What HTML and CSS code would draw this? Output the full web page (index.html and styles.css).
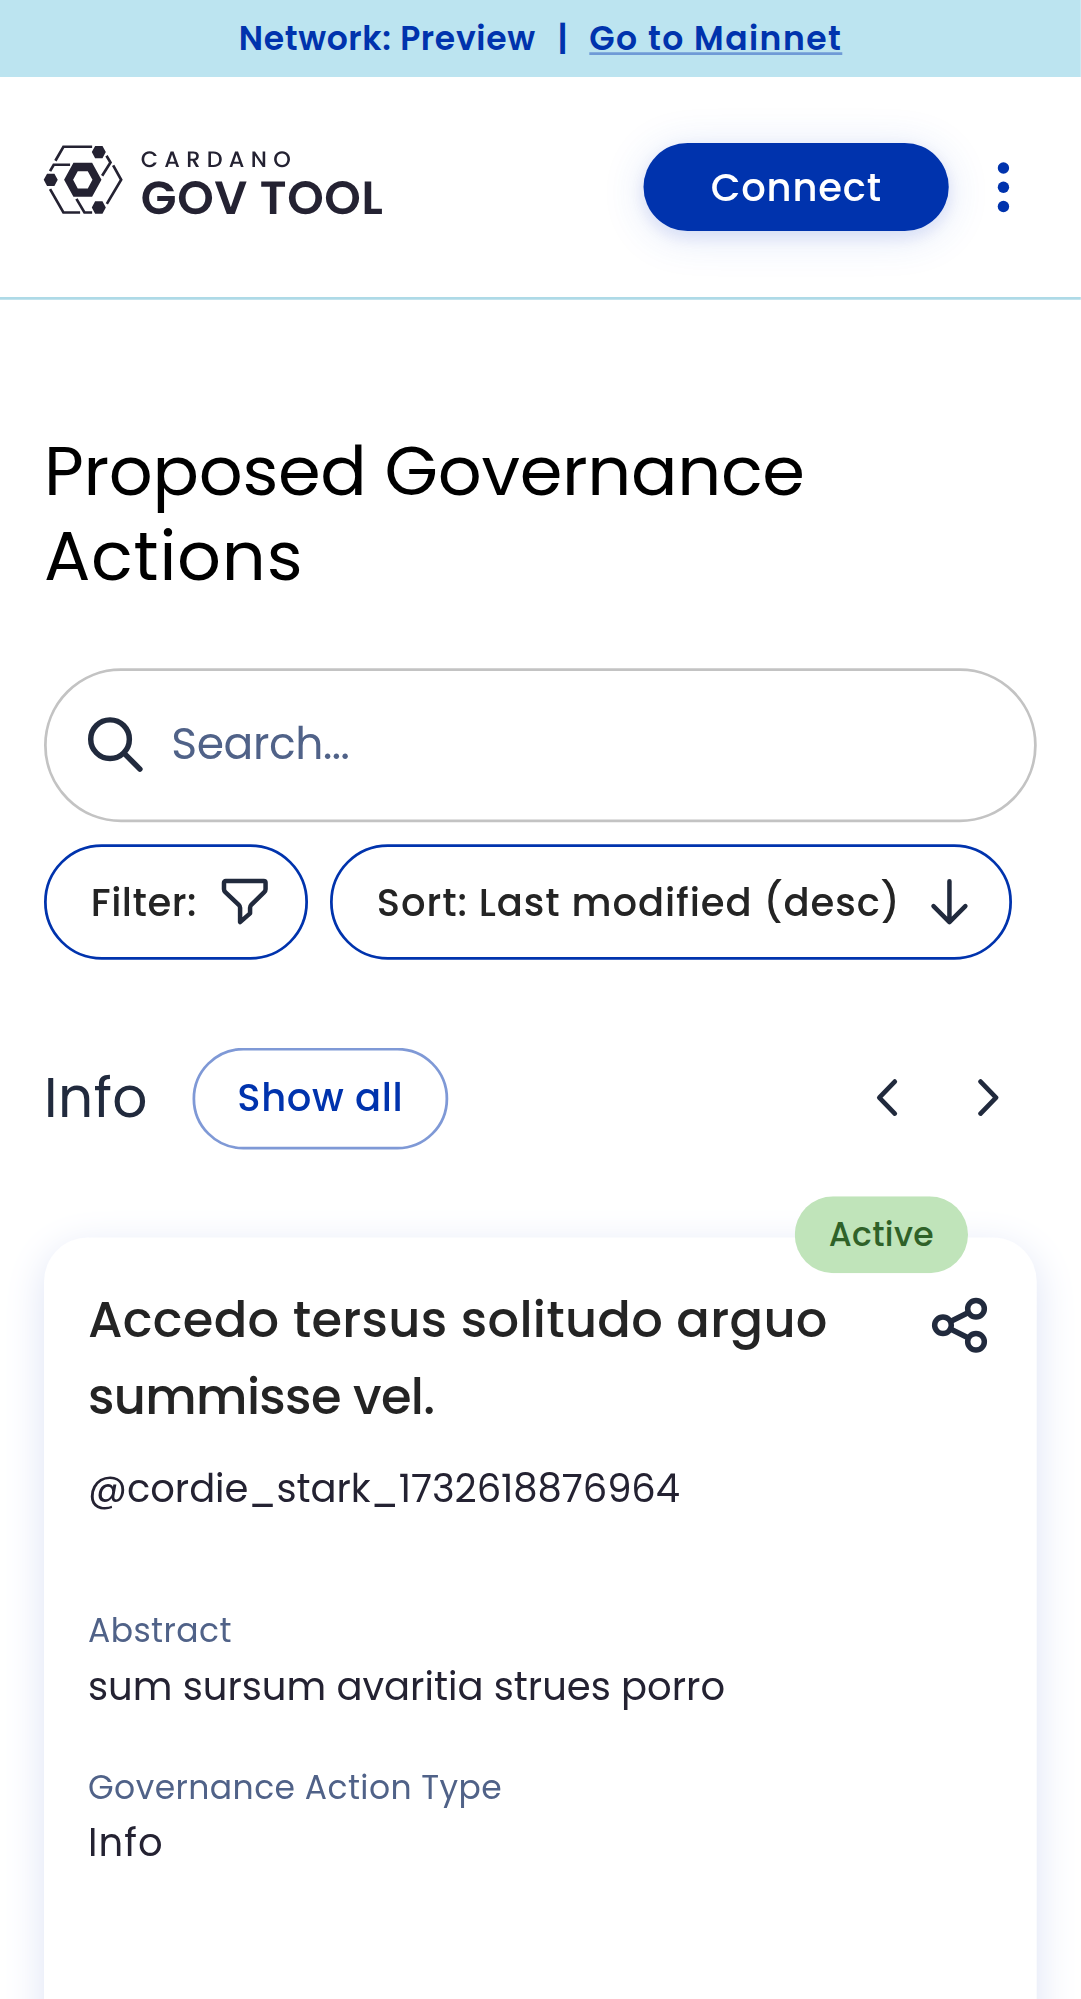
FILE: index.html
```html
<!DOCTYPE html>
<html lang="en">
<head>
<meta charset="utf-8">
<title>Cardano GovTool</title>
<link rel="stylesheet" href="styles.css">
</head>
<body>
<div class="app">
<div class="banner"><span class="network">Network: Preview</span><span class="divider">|</span><a class="mainnet" href="#">Go to Mainnet</a></div>
<header class="header">
  <a class="logo" href="#">
    <svg class="logo-mark" viewBox="44 48 236 205">
      <g fill="none" stroke="currentColor" stroke-width="8">
        <path d="M78 93 102 51H188M62 124 73 105H122M231 78 243 98 218 138M251 107 275 150 232 222M62 178 102 248H152M141 207 165 248H188"/>
      </g>
      <path fill="currentColor" d="M43 150 53 131.500H75L85 150 75 168.500H53ZM187 67 197 48.500H219L229 67 219 85.500H197ZM187 233 197 214.500H219L229 233 219 251.500H197Z"/>
      <path fill="currentColor" fill-rule="evenodd" d="M104 150 132 99H188L216 150 188 201H132ZM131 150 145 176H175L189 150 175 124H145Z"/>
    </svg>
    <span class="logo-text"><span class="logo-small">CARDANO</span><span class="logo-big">GOV TOOL</span></span>
  </a>
  <button class="connect">Connect</button>
  <button class="menu" aria-label="Menu"><svg viewBox="0.800 0 12 50"><g fill="currentColor"><circle cx="6" cy="5.700" r="5.700"/><circle cx="6" cy="25" r="5.700"/><circle cx="6" cy="44.300" r="5.700"/></g></svg></button>
</header>
<main class="main">
  <h1 class="title"><span class="title-first">Proposed Governance</span><br><span class="title-second">Actions</span></h1>
  <div class="search">
    <svg class="search-icon" viewBox="-1.900 -1.300 58 58"><g fill="none" stroke="currentColor" stroke-width="5.500" stroke-linecap="round"><circle cx="23" cy="23" r="19.400"/><path d="M37.500 37.500 53 53"/></g></svg>
    <span class="placeholder">Search...</span>
  </div>
  <div class="controls">
    <button class="control filter"><span>Filter:</span>
      <svg class="filter-icon" viewBox="-.800 -.600 48 48"><path fill="none" stroke="currentColor" stroke-width="4.500" stroke-linejoin="round" d="M5 3.200H43Q44.800 3.200 44.800 5V11.500Q44.800 13 43.500 14.200L30.500 27Q29.300 28.200 29.300 30V35.500L19.300 44.300V30Q19.300 28.200 18 27L4.500 14.200Q3.200 13 3.200 11.500V5Q3.200 3.200 5 3.200Z"/></svg>
    </button>
    <button class="control sort"><span>Sort: Last modified (desc)</span>
      <svg class="arrow-icon" viewBox="0 -.500 40 48"><path fill="none" stroke="currentColor" stroke-width="4.500" stroke-linecap="round" stroke-linejoin="round" d="M20 3.500V44M4 28.500 20 44.500 36 28.500"/></svg>
    </button>
  </div>
  <div class="section-head">
    <h2 class="section-name">Info</h2>
    <button class="show-all">Show all</button>
    <div class="arrows">
      <svg viewBox="-1.300 -.600 22 38"><path d="M19 3 3.500 19 19 35"/></svg>
      <svg viewBox="-1.300 -.600 22 38"><path d="M3 3 18.500 19 3 35"/></svg>
    </div>
  </div>
  <article class="card">
    <span class="badge">Active</span>
    <div class="card-head">
      <h3 class="card-title"><span class="card-title-first">Accedo tersus solitudo arguo</span><br><span class="card-title-second">summisse vel.</span></h3>
      <svg class="share" viewBox=".800 .800 56 56"><g fill="none" stroke="currentColor" stroke-width="5.500"><circle cx="11.500" cy="28" r="8.300"/><circle cx="44.500" cy="11.500" r="8.300"/><circle cx="44.500" cy="44.500" r="8.300"/><path d="M19 24.300 37 15.200M19 31.700 37 40.800"/></g></svg>
    </div>
    <p class="handle">@cordie_stark_1732618876964</p>
    <p class="label abstract">Abstract</p>
    <p class="value">sum sursum avaritia strues porro</p>
    <p class="label type">Governance Action Type</p>
    <p class="value type-value">Info</p>
  </article>
</main>
</div>
</body>
</html>
```
FILE: styles.css
```css
* { box-sizing: border-box; }
body {
  margin: 0;
  height: 1999px;
  overflow: hidden;
  background: #fff;
}
/* Mobile layout, 393px wide, enlarged to the device's 2.75 pixel ratio. */
.app {
  width: 393px;
  height: 727px;
  transform: scale(2.75);
  transform-origin: 0 0;
  color: #242232;
  font-family: Poppins, Inter, "Open Sans", sans-serif;
  white-space: nowrap;
}
h1, h2, h3, p { margin: 0; font-weight: 400; }
button { padding: 0; border: 0; background: none; font: inherit; color: inherit; }
svg { display: block; flex: none; overflow: visible; }

.banner {
  display: flex;
  justify-content: center;
  height: 28px;
  margin-right: -.1px;
  background: #bce4f0;
  color: #0033ad;
  font-size: 12px;
  font-weight: 600;
  line-height: 28px;
}
.network { letter-spacing: .240px; }
.divider { margin: 0 7.900px; }
.mainnet {
  color: inherit;
  letter-spacing: .530px;
  text-decoration: underline #6f9ad6 1px;
  text-underline-offset: 1px;
  text-decoration-skip-ink: none;
}

.header {
  display: flex;
  align-items: flex-start;
  height: 81px;
  margin-right: -.1px;
  padding: 24px 26px 0 16px;
  border-bottom: 1px solid #aedae7;
}
.logo { display: flex; gap: 6.700px; margin: 1px 0 0 -.200px; color: #242232; text-decoration: none; text-rendering: geometricPrecision; }
.logo-mark { width: 28.700px; height: 24.900px; }
.logo-text { display: flex; flex-direction: column; padding-top: .900px; transform: translateY(-.300px); }
.logo-small { font-size: 8.150px; line-height: 9.400px; font-weight: 500; letter-spacing: 2.300px; }
.logo-big { font-size: 16.900px; line-height: 18.400px; font-weight: 600; letter-spacing: .250px; }
.connect {
  width: 111px;
  height: 32px;
  margin-left: auto;
  border-radius: 16px;
  background: #0033ad;
  box-shadow: 0 2px 15px rgba(47, 98, 220, .17), 0 2px 6px rgba(0, 51, 173, .1);
  color: #fff;
  font-size: 14px;
  font-weight: 500;
  letter-spacing: .290px;
}
.menu { margin: 7px 0 0 17.700px; color: #0033ad; }
.menu svg { width: 4.360px; height: 18.200px; }

.main { padding: 47px 16px 0; }
.title { color: #000; font-size: 25px; line-height: 31px; }
.title-first { letter-spacing: -.110px; }
.title-second { letter-spacing: .280px; }

.search {
  display: flex;
  align-items: center;
  height: 56px;
  margin-top: 25px;
  padding: 0 0 1px 14.200px;
  border: 1px solid #c3c3c3;
  border-radius: 28px;
  color: #506288;
  font-size: 16px;
}
.search-icon { width: 21px; height: 21px; margin: .800px 10.100px 0 0; color: #212a3d; }
.placeholder { margin-bottom: .600px; letter-spacing: -.150px; }

.controls { display: flex; gap: 8px; margin-top: 8px; }
.control {
  display: flex;
  align-items: center;
  justify-content: space-between;
  height: 42px;
  border: 1px solid #0033ad;
  border-radius: 21px;
  color: #242424;
  font-size: 14px;
  font-weight: 500;
}
.control svg { color: #212a3d; }
.filter { width: 96px; padding: 0 13.500px 0 16px; letter-spacing: .200px; }
.sort { width: 248px; padding: 0 14.700px 0 16px; letter-spacing: .340px; }
.filter-icon { width: 17.450px; height: 17.450px; }
.arrow-icon { width: 14.500px; height: 17.450px; }

.section-head { display: flex; align-items: center; height: 37px; margin-top: 32px; }
.section-name { width: 54px; padding-bottom: 1px; color: #212a3d; font-size: 20px; line-height: 24px; letter-spacing: .180px; }
.show-all {
  width: 93px;
  height: 37px;
  border: 1px solid #7f99d6;
  border-radius: 18.500px;
  color: #0033ad;
  font-size: 14px;
  font-weight: 500;
  letter-spacing: .230px;
}
.arrows { display: flex; gap: 28.900px; margin: 0 13.900px 1px auto; color: #212a3d; }
.arrows svg { width: 8px; height: 13.800px; fill: none; stroke: currentColor; stroke-width: 4.700px; stroke-linecap: round; stroke-linejoin: round; }

.card {
  position: relative;
  height: 300px;
  margin-top: 32px;
  padding: 16px;
  border-radius: 16px;
  background: #fff;
  box-shadow: 0 4px 15px #dde3f5;
}
.badge {
  position: absolute;
  top: -15px;
  right: 25px;
  width: 63px;
  height: 28px;
  border-radius: 14px;
  background: #c0e4ba;
  color: #2f6128;
  font-size: 12px;
  font-weight: 500;
  line-height: 28px;
  letter-spacing: .120px;
  text-align: center;
}
.card-head { display: flex; justify-content: space-between; }
.card-title { color: #242424; font-size: 18px; font-weight: 500; line-height: 28px; }
.card-title-first { letter-spacing: .116px; }
.card-title-second { letter-spacing: -.230px; }
.share { width: 20.400px; height: 20.400px; margin: 5.500px 1.900px 0 0; color: #212a3d; }
.handle { margin-top: 9px; font-size: 14px; line-height: 20px; letter-spacing: -.020px; }
.label { color: #506288; font-size: 12px; line-height: 18px; letter-spacing: .160px; }
.value { margin-top: 1px; font-size: 14px; line-height: 20px; }
.abstract { margin-top: 33px; }
.type { margin-top: 18px; }
.type-value { letter-spacing: .400px; }
```
